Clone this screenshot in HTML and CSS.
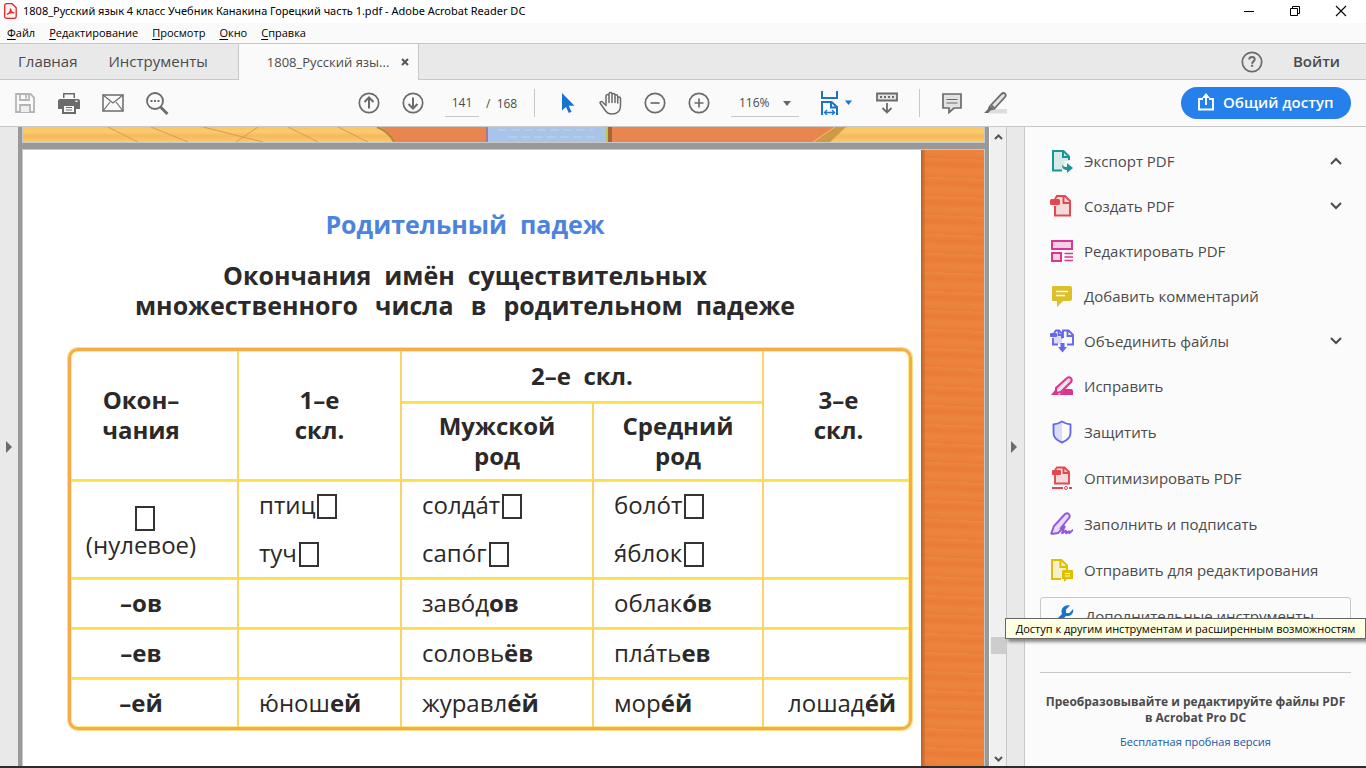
FILE: index.html
```html
<!DOCTYPE html>
<html lang="ru">
<head>
<meta charset="utf-8">
<title>1808_Русский язык 4 класс Учебник Канакина Горецкий часть 1.pdf - Adobe Acrobat Reader DC</title>
<link rel="stylesheet" href="styles.css">
</head>
<body>
<header class="titlebar">
  <svg class="app-icon" width="13" height="16" viewBox="0 0 13 16"><path d="M2.500.7h5.500l4.200 4v8.800a1.800 1.800 0 0 1-1.800 1.800H2.500A1.800 1.800 0 0 1 .7 13.500v-11A1.800 1.800 0 0 1 2.500.7z" fill="#fff5f5" stroke="#e5252a" stroke-width="1.300"/><path d="M3 11.500c2-1 3.600-3.500 3.500-6M6.500 5.500c.2 2.500 1.500 4.200 3.800 4.400M3 11.500c1.500-1.800 4.500-2.300 7.300-1.600" fill="none" stroke="#e5252a" stroke-width="1.200"/></svg>
  <span class="title-text">1808_Русский язык 4 класс Учебник Канакина Горецкий часть 1.pdf - Adobe Acrobat Reader DC</span>
  <div class="window-buttons">
    <button aria-label="Свернуть"><svg width="12" height="12" viewBox="0 0 12 12"><path d="M1 6.500h10" stroke="#000"/></svg></button>
    <button aria-label="Восстановить"><svg width="12" height="12" viewBox="0 0 12 12"><path d="M1.500 3.500h7v7h-7zM3.500 3.500v-2h7v7h-2" fill="none" stroke="#000"/></svg></button>
    <button aria-label="Закрыть"><svg width="12" height="12" viewBox="0 0 12 12"><path d="M1 1l10 10M11 1L1 11" stroke="#000" stroke-width="1.100"/></svg></button>
  </div>
</header>
<nav class="menubar">
  <button><u>Ф</u>айл</button><button><u>Р</u>едактирование</button><button><u>П</u>росмотр</button><button><u>О</u>кно</button><button><u>С</u>правка</button>
</nav>
<div class="tabs">
  <button class="tab home">Главная</button>
  <button class="tab">Инструменты</button>
  <div class="tab-open"><span>1808_Русский язы...</span><button aria-label="Закрыть вкладку"><svg width="8" height="8" viewBox="0 0 8 8"><path d="M1 1l6 6M7 1L1 7" stroke="#555" stroke-width="2"/></svg></button></div>
  <button class="help" aria-label="Справка"><svg width="22" height="22" viewBox="0 0 22 22" fill="none" stroke="#6b6b6b"><circle cx="11" cy="11" r="9.700" stroke-width="1.700"/><path d="M8.300 8.500c0-3.200 5.400-3.200 5.400 0 0 1.900-2.600 1.900-2.600 4.200" stroke-width="2"/><path d="M10 14.800h2.200" stroke-width="2"/></svg></button>
  <button class="signin">Войти</button>
</div>
<div class="toolbar">
  <div class="group">
    <button class="tool" aria-label="Сохранить"><svg width="22" height="22" viewBox="0 0 22 22" fill="none" stroke="#b4b4b4" stroke-width="1.800"><path d="M2 2h14.500L20 5.500V20H2z"/><path d="M6 2v6h9V2M12 3v3.500"/><path d="M6 20v-7h10v7" fill="#eee"/></svg></button>
    <button class="tool" aria-label="Печать"><svg width="22" height="22" viewBox="0 0 22 22" fill="#6b6b6b"><path d="M5 1h12v5H5zM2 7h18a2 2 0 0 1 2 2v8h-4v-5H4v5H0V9a2 2 0 0 1 2-2z"/><path d="M5 13h12v8H5z" fill="#fafafa" stroke="#6b6b6b" stroke-width="2"/><path d="M6.500 2.500h9V7h-9zM17.500 8.500h2v1.500h-2z" fill="#fafafa"/><path d="M8 15.500h6M8 18h6" stroke="#6b6b6b"/></svg></button>
    <button class="tool" aria-label="Отправить"><svg width="22" height="22" viewBox="0 0 22 22" fill="none" stroke="#6b6b6b" stroke-width="1.500"><path d="M1 3h20v16H1z"/><path d="M1 3l10 8L21 3M1 19l7-9M21 19l-7-9" stroke-width="1.200"/></svg></button>
    <button class="tool" aria-label="Поиск"><svg width="24" height="24" viewBox="0 0 24 24" fill="none" stroke="#6b6b6b"><circle cx="10" cy="10" r="8" stroke-width="1.800"/><path d="M15.500 16l7 7" stroke-width="2.800"/><path d="M5.500 10h2M9 10h2M12.500 10h2" stroke-width="2"/></svg></button>
  </div>
  <div class="group pages">
    <button class="tool" aria-label="Назад"><svg width="22" height="22" viewBox="0 0 22 22" fill="none" stroke="#6b6b6b" stroke-width="2"><circle cx="11" cy="11" r="9.700" stroke-width="1.700"/><path d="M11 16.500V6M6.500 10L11 5.500l4.500 4.500"/></svg></button>
    <button class="tool" aria-label="Вперед"><svg width="22" height="22" viewBox="0 0 22 22" fill="none" stroke="#6b6b6b" stroke-width="2"><circle cx="11" cy="11" r="9.700" stroke-width="1.700"/><path d="M11 5.500V16M6.500 12l4.500 4.500 4.500-4.500"/></svg></button>
  </div>
  <label class="page-box"><input type="text" value="141" aria-label="Номер страницы"><span>/&nbsp; 168</span></label>
  <div class="group select-group">
    <button class="tool" aria-label="Выделение"><svg width="22" height="22" viewBox="0 0 22 22"><path d="M6 1v17.500l4-3.500 2.800 6 2.700-1.200-2.800-6h5.800z" fill="#1a73cc"/></svg></button>
    <button class="tool" aria-label="Рука"><svg width="24" height="24" viewBox="0 0 24 24" fill="none" stroke="#6b6b6b" stroke-width="1.500" stroke-linejoin="round" stroke-linecap="round"><path d="M7 14.500L3.500 11c-1.300-1.200-3.200.4-2 1.800l5 7C8 22 10 23 13 23c5 0 8.500-3 8.500-8V7.500c0-2-2.800-2-2.800 0V12M7 14V5c0-2 3-2 3 0v6.500M10 5V3c0-2 3-2 3 0v8.500M13 4c0-2 3-2 3 0v7.500M16 5c0-1.800 2.700-1.600 2.700.5V12"/></svg></button>
    <button class="tool" aria-label="Уменьшить"><svg width="22" height="22" viewBox="0 0 22 22" fill="none" stroke="#6b6b6b" stroke-width="1.700"><circle cx="11" cy="11" r="9.700"/><path d="M6.500 11h9"/></svg></button>
    <button class="tool" aria-label="Увеличить"><svg width="22" height="22" viewBox="0 0 22 22" fill="none" stroke="#6b6b6b" stroke-width="1.700"><circle cx="11" cy="11" r="9.700"/><path d="M6.500 11h9M11 6.500v9"/></svg></button>
  </div>
  <div class="zoom-box"><select aria-label="Масштаб"><option>116%</option></select><svg class="caret" width="8" height="5" viewBox="0 0 8 5"><path d="M0 0h8L4 5z" fill="#666"/></svg></div>
  <button class="fit" aria-label="По ширине"><svg width="32" height="24" viewBox="0 0 32 24" fill="none" stroke="#1a73cc" stroke-width="2"><path d="M2 0v7h15V0"/><path d="M2 24V11h9.500l5.500 5v8M11 11v5.500h6"/><path d="M4.500 21.500h10M7 19l-2.500 2.500L7 24M12 19l2.500 2.500L12 24" stroke-width="1.300"/><path d="M25 9.500h7L28.500 14z" fill="#1a73cc" stroke="none"/></svg></button>
  <button class="tool keys" aria-label="Режим чтения"><svg width="22" height="22" viewBox="0 0 22 22" fill="none" stroke="#6b6b6b" stroke-width="1.800"><path d="M1 1.500h20v7H1z" fill="#e2e2e2"/><path d="M4 5h14" stroke-dasharray="2 2"/><path d="M11 11v9M6.500 16l4.500 4.500 4.500-4.500"/></svg></button>
  <div class="group notes">
    <button class="tool" aria-label="Комментарий"><svg width="22" height="22" viewBox="0 0 22 22" fill="#e2e2e2" stroke="#6b6b6b" stroke-width="1.700"><path d="M2 2h18v14h-7l-5 4.500V16H2z"/><path d="M5.500 7.500h11M5.500 11h11" stroke-width="1.200"/></svg></button>
    <button class="tool" aria-label="Маркер"><svg width="24" height="24" viewBox="0 0 24 24"><path d="M7 18h16v4.500H5z" fill="#ddd"/><path d="M7 14L17.500 3c2.500-2.500 5.500.5 3.500 3L10.500 17.500z" fill="#e2e2e2" stroke="#6b6b6b" stroke-width="1.800"/><path d="M5.500 14l5 4.500-4 1L4.500 22H0L3.500 18.500z" fill="#6b6b6b"/></svg></button>
  </div>
  <button class="share"><svg width="18" height="18" viewBox="0 0 18 18" fill="none" stroke="#fff" stroke-width="1.900"><path d="M6 6H2v10.500h14V6h-4M9 12V2"/><path d="M5 5l4-5 4 5z" fill="#fff" stroke="none"/></svg>Общий доступ</button>
</div>
<main class="workspace">
  <button class="rail left" aria-label="Показать панель"><i class="triangle"></i></button>
  <section class="document">
    <svg class="previous-page" viewBox="0 0 961 15" preserveAspectRatio="none">
      <defs><linearGradient id="sand" x1="0" y1="0" x2="0" y2="1"><stop offset="0" stop-color="#f8c263"/><stop offset=".3" stop-color="#fbcd6a"/><stop offset=".6" stop-color="#f7b860"/><stop offset="1" stop-color="#fccd68"/></linearGradient></defs>
      <rect width="961" height="15" fill="url(#sand)"/>
      <path d="M85 0l30 15M128 0l37 15M180 0l60 15M235 0l-22 15M265 0l30 15M315 0l30 15" stroke="#d99a55" fill="none"/>
      <path d="M357 0h465l-22 15H371q-5-10-14-15z" fill="#e98650"/><path d="M354 0q12 5 17 15" stroke="#b08a3a" stroke-width="2" fill="none"/><path d="M813 0h10l-16 15h-17z" fill="#cf9a45"/><path d="M805 0h8l-22 15h-8z" fill="#e98650"/><path d="M812 0l-22 15" stroke="#f5c070"/>
      <path d="M463 0h121v15H463z" fill="#a8c4e8"/><path d="M464 0v15" stroke="#a47a9c" stroke-width="2"/><path d="M584 0v15" stroke="#b9c65a" stroke-width="2"/><path d="M587 0v15" stroke="#a8642f" stroke-width="4"/><path d="M475 3h95M485 10h90" stroke="#b5cdec" stroke-width="2" stroke-dasharray="9 4"/>
    </svg>
    <div class="sheet">
      <article class="lesson">
        <h1>Родительный &nbsp;падеж</h1>
        <h2>Окончания &nbsp;имён &nbsp;существительных<br>множественного &nbsp;&thinsp;числа &nbsp;&thinsp;в &nbsp;&thinsp;родительном &nbsp;падеже</h2>
        <table>
          <colgroup><col class="c1"><col class="c2"><col class="c3"><col class="c4"><col class="c5"></colgroup>
          <thead>
            <tr class="h-top"><th rowspan="2" class="first">Окон–<br>чания</th><th rowspan="2">1–е<br>скл.</th><th colspan="2">2–е &nbsp;скл.</th><th rowspan="2" class="last">3–е<br>скл.</th></tr>
            <tr class="h-sub"><th class="inner">Мужской<br>род</th><th>Средний<br>род</th></tr>
          </thead>
          <tbody>
            <tr class="r-zero"><td class="zero"><i class="box"></i><br>(нулевое)</td><td>птиц<i class="box"></i><br>туч<i class="box"></i></td><td>солда́т<i class="box"></i><br>сапо́г<i class="box"></i></td><td>боло́т<i class="box"></i><br>я́блок<i class="box"></i></td><td></td></tr>
            <tr><th class="first">–ов</th><td></td><td>заво́д<b>ов</b></td><td>облак<b>о́в</b></td><td></td></tr>
            <tr><th class="first">–ев</th><td></td><td>соловь<b>ёв</b></td><td>пла́ть<b>ев</b></td><td></td></tr>
            <tr><th class="first">–ей</th><td>ю́нош<b>ей</b></td><td>журавл<b>е́й</b></td><td>мор<b>е́й</b></td><td class="wide">лошад<b>е́й</b></td></tr>
          </tbody>
        </table>
      </article>
      <div class="wood"></div>
    </div>
  </section>
  <div class="scrollbar">
    <svg width="9" height="6" viewBox="0 0 9 6"><path d="M1 5l3.500-3.500L8 5" fill="none" stroke="#555" stroke-width="2"/></svg>
    <i class="thumb"></i>
    <svg width="9" height="6" viewBox="0 0 9 6"><path d="M1 1l3.500 3.500L8 1" fill="none" stroke="#555" stroke-width="2"/></svg>
  </div>
  <button class="rail right" aria-label="Скрыть панель"><i class="triangle"></i></button>
  <aside class="panel">
    <ul class="tools">
      <li><button><svg width="24" height="24" viewBox="0 0 24 24"><path d="M3 2h11l5 5v5h-4l-2 9H3z" fill="#d6ebe8"/><path d="M12 21.500H3V2h10.500L19 7.500V11M13 2v6h6" fill="none" stroke="#1d9597" stroke-width="2"/><path d="M12 15.500c1 2 3 2.500 5 2.500v-4l6 5-6 5v-3c-4 0-5-2.500-5-5.500z" fill="#1d9597"/></svg><span>Экспорт PDF</span><svg class="chevron" width="12" height="8" viewBox="0 0 12 8"><path d="M1 7l5-5 5 5" /></svg></button></li>
      <li><button><svg width="24" height="24" viewBox="0 0 24 24"><path d="M6 2h9l5 5v15H4V9h2z" fill="#f6dada"/><path d="M5 12v9.500h15V7L15 2H7l-2 3M13.500 2v7H20" fill="none" stroke="#e34850" stroke-width="2"/><rect y="5" width="10" height="6" rx="1.500" fill="#e34850"/></svg><span>Создать PDF</span><svg class="chevron" width="12" height="8" viewBox="0 0 12 8"><path d="M1 1l5 5 5-5" /></svg></button></li>
      <li><button><svg width="24" height="24" viewBox="0 0 24 24" fill="#f4d0e8" stroke="#d83790" stroke-width="2"><rect x="2" y="2" width="20" height="8"/><rect x="2" y="14" width="9" height="8"/><path d="M14.500 14.500H23M14.500 18H23M14.500 21.500H23" stroke-width="1.300"/></svg><span>Редактировать PDF</span></button></li>
      <li><button><svg width="24" height="24" viewBox="0 0 24 24"><path d="M3 2h17a2 2 0 0 1 2 2v11a2 2 0 0 1-2 2h-7l-6 6v-6H3a1 1 0 0 1-1-1V3a1 1 0 0 1 1-1z" fill="#dfbf28"/><path d="M6 7.500h12M6 11.500h9" stroke="#fff" stroke-width="1.500"/></svg><span>Добавить комментарий</span></button></li>
      <li><button><svg width="24" height="24" viewBox="0 0 24 24"><path d="M3 7h9v8H4z" fill="#dcdcf7"/><path d="M3 9v6.500h5M4 4l2-2.500h3l3 3v5M8.500 2v4H12M13 9V1.500h5.500L23 6v9.500h-6M17.500 2v5H23" fill="none" stroke="#6767ec" stroke-width="1.900"/><rect y="4" width="7" height="4" rx="1" fill="#6767ec"/><path d="M10.500 14h4v4H17l-4.500 5.500L8 18h2.500z" fill="#6767ec"/></svg><span>Объединить файлы</span><svg class="chevron" width="12" height="8" viewBox="0 0 12 8"><path d="M1 1l5 5 5-5" /></svg></button></li>
      <li><button><svg width="24" height="24" viewBox="0 0 24 24"><path d="M1 21l4-5 4 5zM9 21l6-6h6q2 0 2 2v4z" fill="#d83790"/><path d="M6 14L17 4c3-2 6 1 4 4L11 18l-5 1z" fill="#f4d0e8" stroke="#d83790" stroke-width="2"/><path d="M8 17l9-9" stroke="#fff"/></svg><span>Исправить</span></button></li>
      <li><button><svg width="24" height="24" viewBox="0 0 24 24"><path d="M12 2L4 4.500V14q1 5 8 8z" fill="#dcdcf7"/><path d="M12 1.500q4 2.500 8.500 3V13q0 6-8.500 9.500Q3.500 19 3.500 13V4.500q4.500-.5 8.500-3z" fill="none" stroke="#6767ec" stroke-width="1.900"/></svg><span>Защитить</span></button></li>
      <li><button><svg width="24" height="24" viewBox="0 0 24 24"><path d="M6 2h9l4 4v11H6z" fill="#f6dada"/><path d="M5 9v8.500h14V6l-4.500-4.500H7L5 4M13.500 2v5H19M2 22h11M19 22h3" fill="none" stroke="#e34850" stroke-width="1.900"/><rect x="2" y="4" width="9" height="5" rx="1" fill="#e34850"/><circle cx="16" cy="22" r="1.500" fill="#fff" stroke="#e34850"/></svg><span>Оптимизировать PDF</span></button></li>
      <li><button><svg width="24" height="24" viewBox="0 0 24 24"><path d="M2 22l2-8L15 2c3-2 6 1 4 4L9 19z" fill="#e6daf5"/><path d="M1 22l3-8L15 2c3-2 6 1 4 4L10 17M1 22l7-1 7-7-3 7c2 1 4-5 4-1s3-3 3 0 3-2 4-2" fill="none" stroke="#9256d9" stroke-width="1.900"/></svg><span>Заполнить и подписать</span></button></li>
      <li><button><svg width="24" height="24" viewBox="0 0 24 24"><path d="M2 2h10l6 6v13H2z" fill="#f5efcf"/><path d="M11 21H2V2h9.500L17 7.500V12M10.500 2v7H17" fill="none" stroke="#dfbf00" stroke-width="2"/><path d="M13 12h9a1 1 0 0 1 1 1v8h-6l-3 3v-3h-2v-8z" fill="#dfbf00"/><path d="M15 15.500h5M15 18h5" stroke="#fff"/></svg><span>Отправить для редактирования</span></button></li>
      <li class="more"><button><svg width="24" height="24" viewBox="0 0 24 24"><path d="M19 1.500L15 5.500v3.500h3.500L22 5c1 4-2 8-7 7L6 21c-2 2-5-1-3-3l8-8C9 4 14 0 19 1.500z" fill="#1a73cc"/></svg><span>Дополнительные инструменты</span></button></li>
    </ul>
    <div class="promo"><p>Преобразовывайте и редактируйте файлы PDF в&nbsp;Acrobat Pro DC</p><a href="#">Бесплатная пробная версия</a></div>
    <div class="tooltip" role="tooltip">Доступ к другим инструментам и расширенным возможностям</div>
  </aside>
</main>
<footer class="taskbar"></footer>
</body>
</html>
```
FILE: styles.css
```css
* { box-sizing: border-box; }
body { margin: 0; height: 100vh; display: flex; flex-direction: column; overflow: hidden; background: #fafafa; color: #4b4b4b; font-family: "Open Sans", "Noto Sans", sans-serif; font-size: 15px; }
button, input, select { font: inherit; color: inherit; }
button { padding: 0; border: 0; background: none; }
svg { display: block; flex: none; }

.titlebar { height: 23px; flex: none; display: flex; align-items: center; padding: 0 19px 2px 4px; gap: 6px; background: #fff; color: #000; font-family: "Noto Sans", sans-serif; font-size: 11px; white-space: nowrap; }
.window-buttons { margin-left: auto; display: flex; gap: 34px; }
.menubar { height: 20px; flex: none; display: flex; align-items: center; gap: 14px; padding-left: 7px; color: #000; font-size: 11px; line-height: 16px; }
.menubar u { text-underline-offset: 2px; }

.tabs { height: 37px; flex: none; display: flex; align-items: stretch; background: #e9e9e9; border-top: 1px solid #c8c8c8; border-bottom: 1px solid #c8c8c8; }
.tab { margin-left: 31px; padding-bottom: 2px; }
.tab.home { margin-left: 18px; }
.tab-open { width: 181px; height: 36px; margin-left: 30px; display: flex; align-items: center; gap: 12px; padding-left: 28px; background: #fafafa; border: solid #c8c8c8; border-width: 0 1px; font-size: 13px; white-space: nowrap; }
.help { margin-left: auto; }
.signin { margin: 0 26px 0 30px; padding-bottom: 2px; font-weight: 600; }

.toolbar { height: 47px; flex: none; display: flex; align-items: center; padding: 0 15px 0 9px; border-bottom: 1px solid #c8c8c8; }
.group { display: flex; gap: 12px; }
.tool { width: 32px; height: 32px; display: flex; align-items: center; justify-content: center; }
.pages { margin-left: 180px; }
.page-box { margin-left: 16px; display: flex; gap: 7px; align-items: center; font-size: 12px; }
.page-box input { width: 34px; height: 28px; padding: 0 0 1px; border: 0; border-bottom: 1px solid #c8c8c8; background: none; text-align: center; }
.page-box span { width: 48px; }
.select-group { border-left: 1px solid #c8c8c8; padding-left: 16px; height: 28px; align-items: center; }
.zoom-box { position: relative; margin-left: 16px; }
.zoom-box select { appearance: none; width: 68px; height: 28px; padding: 0 0 1px 8px; border: 0; border-bottom: 1px solid #c8c8c8; border-radius: 0; background: none; font-size: 12px; }
.caret { position: absolute; right: 8px; top: 12px; pointer-events: none; }
.fit { margin-left: 21px; }
.keys { margin-left: 19px; }
.notes { margin-left: 16px; padding-left: 16px; height: 28px; align-items: center; border-left: 1px solid #c8c8c8; }
.share { width: 170px; height: 32px; margin-left: auto; display: flex; align-items: center; gap: 8px; padding: 0 0 2px 16px; border-radius: 16px; background: #2680eb; color: #fff; font-weight: 600; white-space: nowrap; }

.workspace { flex: 1; min-height: 0; display: flex; }
.rail { width: 18px; flex: none; display: flex; align-items: center; justify-content: center; background: #e9e9e9; }
.rail.right { width: 19px; padding-right: 3px; border: solid #c8c8c8; border-width: 0 1px; }
.triangle { border: solid transparent; border-width: 6px 0 6px 6px; border-left-color: #6b6b6b; }
.document { flex: 1; min-width: 0; overflow: hidden; background: #999; padding: 0 4px; display: flex; flex-direction: column; }
.previous-page { width: 100%; height: 16px; border: solid #c8c8c8; border-width: 0 1px 1px; }
.sheet { margin-top: 6px; flex: 1; display: flex; border: solid #c8c8c8; border-width: 1px 1px 0; background: #fff; }
.wood { width: 63px; background: linear-gradient(90deg, #b46229, transparent 5px), repeating-linear-gradient(2deg, #ea7d39 0, #ec853d 7px, #ea7b37 13px, #ec873f 19px), #eb7f3a; }
.lesson { flex: 1; padding: 58px 9px 0 45px; color: #2b2929; }
h1, h2 { margin: 0; padding-right: 50px; text-align: center; font-weight: 700; font-size: 25px; line-height: 30px; white-space: nowrap; }
h1 { margin-bottom: 20px; color: #4c83dc; line-height: 32px; }
table { width: 100%; margin-top: 28px; table-layout: fixed; border-collapse: separate; border-spacing: 0; border: 3px solid #f5ab48; border-radius: 10px; box-shadow: inset 0 0 0 1px #fdee8a, 0 0 0 1px #fbe088; font-size: 24px; line-height: 30px; }
.c1 { width: 166px; } .c2 { width: 163px; } .c3 { width: 192px; } .c4 { width: 170px; }
th, td { padding: 0; border-top: 2px solid #fce04a; box-shadow: inset 0 1px #fbd2cb; }
th { text-align: center; font-weight: 700; }
td { padding-left: 20px; text-align: left; white-space: nowrap; }
td.wide { padding-left: 24px; }
tr > :not(:first-child), .inner { border-left: 2px solid #f9d468; }
thead tr:first-child th { border-top: 0; box-shadow: none; }
.h-sub .inner { border-left: 2px solid #f9d468; }
.h-top { height: 50px; }
.h-sub { height: 78px; }
tbody tr { height: 50px; }
.r-zero { height: 98px; }
.r-zero td { line-height: 48px; }
td.zero { padding: 4px 26px 0 0; text-align: center; line-height: 28px; }
th.first { padding-right: 26px; }
th.last { padding-left: 4px; }
.box { display: inline-block; width: 20px; height: 25px; margin-left: 2px; border: 2px solid #333; vertical-align: -5px; }
.zero .box { margin-left: 8px; }

.scrollbar { width: 17px; flex: none; display: flex; flex-direction: column; align-items: center; padding: 7px 0 4px; background: #f0f0f0; border-left: 1px solid #fff; }
.thumb { width: 15px; height: 17px; margin: auto 0 102px; background: #cdcdcd; }

.panel { position: relative; width: 341px; flex: none; padding: 12px 15px 0; background: #fbfbfb; }
.tools { margin: 0; padding: 0; list-style: none; }
.tools li { height: 45px; }
.tools li:nth-child(n+6) { height: 46px; }
.tools button { width: 100%; height: 100%; display: flex; align-items: center; gap: 10px; padding: 0 9px 2px 10px; white-space: nowrap; }
.chevron { margin-left: auto; fill: none; stroke: #4b4b4b; stroke-width: 2; }
.tools li.more { height: 40px; margin-top: 3px; border: 1px solid #c8c8c8; border-radius: 3px; }
.promo { margin-top: 35px; padding-top: 21px; border-top: 1px solid #c8c8c8; text-align: center; font-size: 12px; line-height: 16px; }
.promo p { margin: 0 0 8px; font-weight: 700; }
.promo a { color: #1556a8; font-size: 11px; text-decoration: none; }
.tooltip { position: absolute; right: 0; top: 491px; width: 361px; height: 21px; border: 1px solid #666; background: #ffffe1; box-shadow: 3px 3px 3px #888; color: #000; font-size: 11px; line-height: 19px; text-align: center; white-space: nowrap; }
.taskbar { height: 2px; flex: none; background: #2d2b2b; }
```
